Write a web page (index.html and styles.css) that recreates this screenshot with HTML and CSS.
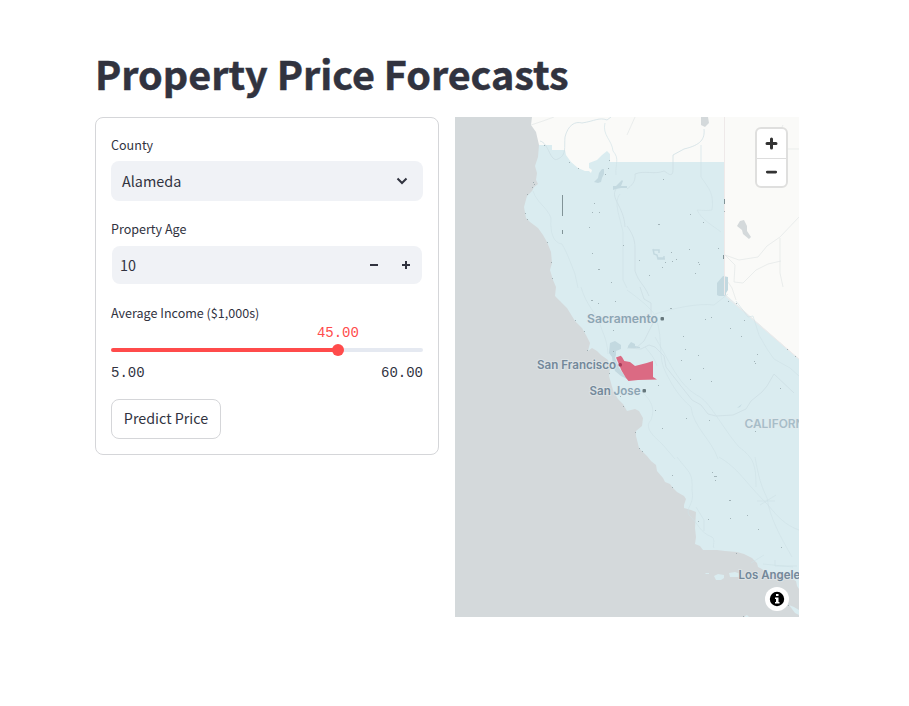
FILE: index.html
```html
<!DOCTYPE html>
<html lang="en">
<head>
<meta charset="utf-8">
<title>Property Price Forecasts</title>
<link rel="stylesheet" href="styles.css">
</head>
<body>
<main class="page">
  <h1 class="title">Property Price Forecasts</h1>
  <div class="columns">
    <form class="panel">
      <div class="label">County</div>
      <div class="select"><span>Alameda</span>
        <svg width="16" height="16" viewBox="0 0 16 16"><path d="M3.5 5.5 8 10 12.5 5.5" fill="none" stroke="#31333f" stroke-width="2"/></svg>
      </div>
      <div class="label">Property Age</div>
      <div class="number"><span>10</span>
        <div class="steps">
          <svg width="32" height="38" viewBox="0 0 32 38"><path d="M12 18h8v2h-8z" fill="#31333f"/></svg>
          <svg width="32" height="38" viewBox="0 0 32 38"><path d="M12 18h3v-3h2v3h3v2h-3v3h-2v-3h-3z" fill="#31333f"/></svg>
        </div>
      </div>
      <div class="label income">Average Income ($1,000s)</div>
      <div class="slider">
        <div class="track"><div class="thumb"><span class="value">45.00</span></div></div>
      </div>
      <div class="range"><span>5.00</span><span>60.00</span></div>
      <button class="predict" type="button">Predict Price</button>
    </form>
    <section class="map">
      <svg class="canvas" width="344" height="500" viewBox="0 0 344 500">
        <rect width="344" height="500" fill="#d4d9db"/>
        <path fill="#fafaf8" d="M77 0 76 8 81 15 84 28V60H260V170L344 260V0Z"/>
        <path fill="#daecf0" d="M84 28H97V33H110L111 38 116 45 123 51 130 54 134 54 136 56 137 53 134 51V46L142 43 147 38 152 34 155 37V45H269V176L271 178 344 242V472L342 469 341 464 337 462 334 457 312 457 307 452 303 450 302 446 297 441 289 437 282 435 270 434 262 433 248 433 245 429 240 427 241 420 240 411 241 395 236 393 229 391V388L231 382 229 379 222 375 218 371 215 367 210 365 208 361 202 354 201 348 196 344 192 339 187 334 184 331 181 319V314L187 309 188 301 184 294 180 292 172 294 168 287 163 282 158 273 154 259 155 251 153 243 146 238 142 234 137 231 133 234 135 226 131 218 127 211 120 204 112 191 105 184 100 179 101 170 98 163 95 153 97 146 96 135 92 125 88 118 83 111 75 105 71 101 69 90 72 79 77 74 79 70 83 67 81 63 82 56 80 49 83 40Z"/>
        <path fill="#daecf0" d="M251 456l3 0 0 1-4 0zM259 459l4-2 6 1 0 3-3 2-5 0zM274 456l6-1 6 2-2 3-9 0zM334 488l5 2 5 3v5l-4-2zM290 499l2-1 2 2h-4z"/>
        <path fill="#d4d9db" d="M246 0h7l1 6-4 4-4-2zM282 109l3-5 4-1 3 6 0 5 4 6-2 2-6-5-1-4z"/>
        <g fill="#c3d9e0"><path d="M262 178v-12l6-7 5 1v13l-2 3v3h-7zM147 52h2v5l-2 4-1 4-3 1-4-1 4-4 1-5zM158 69h3l2-2 4-4 1 1-2 5h6v2h-6l-5 1-3 1z"/><path d="M155 226l5-2 6 4v4l-5 2 0 4-1 3 4 10 8 11-6-3-6-5-2-6-1-8-3-4zM173 229l3-4 4 2 0 2 5 1v1h-12zM282 291l5-4-2 3z"/></g>
        <path fill="none" stroke="#c3d9e0" stroke-width="1.500" d="M198 132l1 5 3 1 1 4h7M199 133h5v3M203 141h6v-2"/>
        <path class="border" d="M269.500 0V178L344 242" fill="none" stroke="#eee9e9"/>
        <g fill="none" stroke="#cbdce3" stroke-width=".7">
          <path d="M85 24C94 26 95 46 103 42 112 38 109 30 110 20 113 8 120 4 127 6 140 4 144 0 152 3L156 0"/>
          <path d="M161 72c-6 10 8 17 9 38M172 109c5 7 8 13 8 22v23c4 12 9 13 14 25M249 12c1 10-3 16-20 20L218 38v14c0 10-5 4-9 2-10 4-19-1-29 3 1 8-4 12-8 15"/>
          <path d="M185 170l4 12 7 4 0 12M172 231l14 1 8-4 6 2 9 9 2 11 26 33 9 5 7 9 8 2 17-1 13-6 5-8 11-9 5-6 7-12 20 19M198 198l0 8-9 18-8 7"/>
        </g>
        <g fill="none" stroke="#cfe0e5" stroke-width=".6">
          <path d="M78 74C82 86 92 90 96 101 95 115 98 126 107 127 112 136 115 144 120 157l3 14M150 6c-3 12 7 17 8 28 7 8 2 13 3 24M165 77c-6 8-2 17 3 38v48l4 8M126 170c5 18 15 26 19 37 2 8 7 14 8 30M172 173c18 13 26 21 29 27 8 26 1 39 10 56 5 10 12 23 25 34 2 20 21 33 27 52"/>
          <path d="M246 28v32c9 13 13 17 11 33-5 1-12 0-15 0 5 10 15 15 24 22M200 197c20-6 42-11 59-9l14-11M200 220c17 29 24 49 45 60 11 7 24 33 39 50 15 11 17 18 17 40M190 230c8 9 10 13 12 19M184 272c16 14 15 22 12 31-8 8 4 17 12 25l12 14M222 340c12 16 16 15 15 33 3 15-7 17-3 25 10 9 10 17 23 22 4 3 0 9 2 11M264 340c20 12 24 23 49 48 10 12 17 20 31 25M300 340c4 22 6 28 12 41 3 20 13 38 25 59M305 388l16-10M302 384h18M241 390l8 13v11M296 446l13-8M308 447l30 3M320 443v6h22"/>
        </g>
        <path fill="none" stroke="#e2e7e7" stroke-width=".7" d="M76 8l12-4 11-4M344 100l-19 20-13 9-9 11-19 3-14-5 10 10-1 17 9 1 13-13 12-6 13-3M325 121v35l3 14M273 165l4 6 4 12M344 32l-12 0-6-5-1-13 3-6M172 18l8-18"/>
        <path fill="none" stroke="#cfe0e5" stroke-width=".6" d="M281 184l12 16 5-1 6 19 8 14 7 10 16 9 9 8"/>
        <path fill="#db6a83" d="M161 240.500 165.700 238.700 167 240 169.300 244 175 245 180 249 191.700 246 198 244V260L202 262.500 183 263 173.500 264 171 261 166.500 253.500Z"/>
        <g stroke="#819397" fill="none">
          <path d="M107.500 78v21M107.500 113v4M269.500 82v5M268.500 138v4"/>
          <path transform="translate(.5 .5)" stroke-linecap="square" stroke-opacity=".7" stroke-width=".9" d="M89 28h.01M114 45h.01M123 51h.01M154 43h.01M153 51h.01M150 57h.01M78 65h.01M79 67h.01M77 70h.01M72 77h.01M70 96h.01M72 102h.01M92 125h.01M96 145h.01M97 161h.01M139 86h.01M137 95h.01M144 95h.01M134 110h.01M168 128h.01M137 136h.01M143 152h1M156 165h.01M208 62h.01M235 97h.01M203 107h1M248 105h.01M216 135h.01M234 132h.01M263 131h.01M184 143h.01M210 145h.01M217 144h.01M221 142h.01M207 150h.01M243 145h.01M244 147h.01M240 156h.01M194 158h.01M269 94h.01M136 183h1M143 186h.01M160 184h.01M120 203h.01M129 214h.01M132 233h.01M158 213h.01M158 234h.01M154 256h.01M165 279h.01M168 289h.01M215 191h1M250 202h.01M256 200h.01M275 211h.01M289 203h.01M286 219h.01M228 219h.01M230 232h.01M243 238h.01M226 243h.01M248 251h.01M256 264h.01M235 262h.01M203 268h.01M299 244h.01M302 237h.01M300 246h.01M325 271h.01M332 232h.01M273 184h.01M281 186h.01M340 239h.01M200 293h.01M231 301h.01M254 303h.01M207 311h.01M300 314h.01M180 315h.01M184 331h.01M187 334h.01M217 358h.01M217 370h.01M257 355h.01M259 359h2M260 363h.01M274 383h1M275 401h.01M253 402h.01M243 404h.01M292 398h.01M303 412h.01M326 430h.01M281 436h.01M288 499h.01M333 488h.01"/>
        </g>
        <g class="places">
          <text x="132" y="205.500" fill="#8ba5b4" textLength="71" lengthAdjust="spacingAndGlyphs">Sacramento</text>
          <text x="82" y="252" textLength="79" lengthAdjust="spacingAndGlyphs">San Francisco</text>
          <text x="134.500" y="277.500" textLength="51" lengthAdjust="spacingAndGlyphs">San <tspan fill="#8ba5b4">Jose</tspan></text>
          <text x="289.500" y="311" fill="#a7bdc8" textLength="72" lengthAdjust="spacingAndGlyphs">CALIFORNIA</text>
          <text x="283.500" y="461.500" textLength="68" lengthAdjust="spacingAndGlyphs">Los Angeles</text>
        </g>
        <g fill="#66777c"><rect x="205.500" y="200" width="3.500" height="3.500" rx="1"/><rect x="187.500" y="272" width="3.500" height="3.500" rx="1"/><rect x="163.500" y="246" width="3.500" height="3.500" rx="1.500" fill="#a63e5a"/></g>
      </svg>
      <div class="zoom">
        <svg width="29" height="29" viewBox="0 0 29 29"><path d="M14.500 10v9M10 14.500h9" stroke="#333" stroke-width="3" stroke-linecap="round"/></svg>
        <svg class="minus" width="29" height="29" viewBox="0 0 29 29"><path d="M10 14h9" stroke="#333" stroke-width="3" stroke-linecap="round"/></svg>
      </div>
      <svg class="info" width="24" height="24" viewBox="0 0 24 24"><circle cx="12" cy="12" r="12" fill="#fff"/><circle cx="12" cy="12" r="7.200"/><path fill="#fff" d="M11 7h2.500v2H11zM10 10.500h3.500v4.500h1v1.500h-4.500v-1.500h1v-3h-1z"/></svg>
    </section>
  </div>
</main>
</body>
</html>
```
FILE: styles.css
```css
* { box-sizing: border-box; }
body {
  margin: 0;
  background: #fff;
  color: #31333f;
  font-family: "Noto Sans CJK SC", "Noto Sans", sans-serif;
}
.page { width: 704px; margin-left: 95px; padding-top: 46px; }
.title {
  margin: 0;
  height: 71px;
  font-size: 39.500px;
  line-height: 53px;
  font-weight: 700;
  -webkit-text-stroke: .5px #31333f;
  white-space: nowrap;
}
.columns { display: flex; gap: 16px; align-items: flex-start; }
.panel {
  width: 344px;
  height: 338px;
  padding: 15px;
  border: 1px solid #d5d6d9;
  border-radius: 8px;
}
.label { height: 28px; font-size: 12.550px; line-height: 24px; }
.select, .number {
  display: flex;
  align-items: center;
  justify-content: space-between;
  background: #f0f2f6;
  border-radius: 8px;
  font-size: 14.400px;
}
.select span, .number span { padding-bottom: 2px; }
.select { height: 40px; padding: 0 13px 0 11px; margin-bottom: 16px; }
.number { height: 38px; margin: 1px 1px 17px; padding-left: 8px; }
.steps { display: flex; }
.steps svg, .select svg { display: block; }
.label.income { height: 28px; }
.slider { height: 31px; padding-top: 19px; }
.track {
  height: 4px;
  border-radius: 4px;
  background: linear-gradient(to right, #ff4b4b 72.73%, #e5e9f1 72.73%);
}
.thumb {
  position: relative;
  left: calc(72.73% - 6px);
  top: -4px;
  width: 12px;
  height: 12px;
  border-radius: 50%;
  background: #ff4b4b;
}
.value {
  position: absolute;
  left: -15px;
  bottom: 15px;
  color: #ff4b4b;
  line-height: 16px;
}
.value, .range { font-family: "Liberation Mono", monospace; font-size: 14px; }
.range { display: flex; justify-content: space-between; height: 39px; line-height: 26px; }
.predict {
  display: block;
  width: 110px;
  height: 40px;
  padding: 0 0 3px;
  background: #fff;
  color: inherit;
  font: 14.300px "Noto Sans CJK SC", sans-serif;
  border: 1px solid #d5d6d9;
  border-radius: 8px;
}
.map { position: relative; width: 344px; height: 500px; overflow: hidden; }
.canvas { display: block; }
.places {
  font: 600 11.500px Inter, sans-serif;
  fill: #73889a;
  stroke: #e3eaed;
  stroke-opacity: .55;
  stroke-width: 2px;
  paint-order: stroke;
}
.zoom {
  position: absolute;
  top: 10px;
  right: 11px;
  width: 33px;
  height: 61px;
  border: 2px solid #dfdfde;
  border-radius: 6px;
  background: #fff;
}
.zoom svg { display: block; height: 28px; }
.zoom svg:first-child { height: 29px; }
.zoom .minus { border-top: 1px solid #ddd; }
.info { position: absolute; right: 10px; bottom: 6px; }
```
